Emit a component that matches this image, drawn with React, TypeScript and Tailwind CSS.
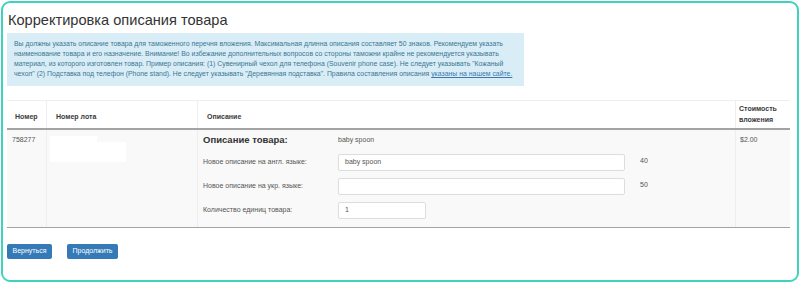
export default function App() {
  return (
    <div className="w-[800px] h-[283px] bg-white p-px font-['Liberation_Sans',Arial,sans-serif] text-[#333]">
      <div className="h-full rounded-[9px] border-2 border-[#3fd3be] px-1 pt-[7px]">
        <h1 className="ml-px text-[14.6px] leading-[20px] text-[#333]">Корректировка описания товара</h1>

        <div className="mt-[3px] w-[517px] h-[53px] bg-[#d9edf7] px-[7px] pt-[6px] text-[6.9px] leading-[10px] text-[#3a7694] whitespace-nowrap">
          Вы должны указать описание товара для таможенного перечня вложения. Максимальная длинна описания составляет 50 знаков. Рекомендуем указать
          <br />
          наименование товара и его назначение. Внимание! Во избежание дополнительных вопросов со стороны таможни крайне не рекомендуется указывать
          <br />
          материал, из которого изготовлен товар. Пример описания: (1) Сувенирный чехол для телефона (Souvenir phone case). Не следует указывать "Кожаный
          <br />
          чехол" (2) Подставка под телефон (Phone stand). Не следует указывать "Деревянная подставка". Правила составления описания{" "}
          <a className="underline text-[#3b77ad]" href="#">указаны на нашем сайте.</a>
        </div>

        {/* table */}
        <div className="mt-[14px] w-[783px] border-t border-[#eee] text-[7px]">
          <div className="grid grid-cols-[39px_151px_538px_55px] h-[29px] border-b-2 border-[#a3a3a3] font-bold text-[#3a3a3a]">
            <div className="flex items-end pl-[8px] pb-[6px]">Номер</div>
            <div className="flex items-end border-l border-[#eee] pl-[9px] pb-[6px]">Номер лота</div>
            <div className="flex items-end border-l border-[#eee] pl-[9px] pb-[6px]">Описание</div>
            <div className="flex items-end border-l border-[#eee] pl-[3px] pb-[3px] leading-[11px]">
              Стоимость
              <br />
              вложения
            </div>
          </div>

          <div className="grid grid-cols-[39px_151px_538px_55px] h-[98px] bg-[#f9f9f9] border-b border-[#a3a3a3] text-[#555]">
            <div className="pl-[5px] pt-[5px]">758277</div>
            <div className="border-l border-[#eee] pl-[3px] pt-[6px]">
              <div className="w-[47px] h-[6px] bg-white" />
              <div className="w-[76px] h-[20px] bg-white" />
            </div>
            <div className="border-l border-[#eee] pl-[5px] pt-[4px]">
              <div className="flex items-center h-[12px]">
                <span className="w-[135px] text-[9.5px] font-bold text-[#333]">Описание товара:</span>
                <span>baby spoon</span>
              </div>
              <div className="flex items-start mt-[8px] h-[17px]">
                <span className="w-[135px] pt-[3px]">Новое описание на англ. языке:</span>
                <div className="w-[287px] h-[17px] rounded-[2px] border border-[#ddd] bg-white px-[6px] flex items-center">baby spoon</div>
                <span className="ml-[15px] pt-[2px]">40</span>
              </div>
              <div className="flex items-start mt-[7px] h-[17px]">
                <span className="w-[135px] pt-[3px]">Новое описание на укр. языке:</span>
                <div className="w-[287px] h-[17px] rounded-[2px] border border-[#ddd] bg-white" />
                <span className="ml-[15px] pt-[2px]">50</span>
              </div>
              <div className="flex items-start mt-[7px] h-[17px]">
                <span className="w-[135px] pt-[3px]">Количество единиц товара:</span>
                <div className="w-[88px] h-[17px] rounded-[2px] border border-[#ddd] bg-white px-[6px] flex items-center">1</div>
              </div>
            </div>
            <div className="border-l border-[#eee] pl-[4px] pt-[5px]">$2.00</div>
          </div>
        </div>

        <div className="mt-[16px] flex gap-[15px]">
          <button className="w-[45px] h-[15px] rounded-[2px] bg-[#337ab7] text-white text-[7px]">Вернуться</button>
          <button className="w-[51px] h-[15px] rounded-[2px] bg-[#337ab7] text-white text-[7px]">Продолжить</button>
        </div>
      </div>
    </div>
  );
}
